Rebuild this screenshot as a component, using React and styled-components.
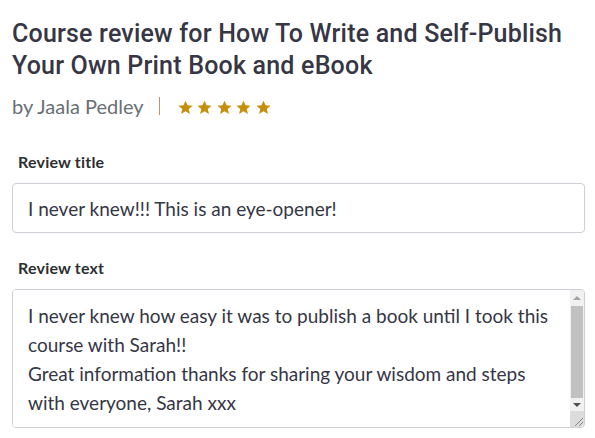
import React from 'react';
import styled, { createGlobalStyle } from 'styled-components';

const GlobalStyle = createGlobalStyle`
	body {
		margin: 0;
		background: #fff;
		font-family: Lato, 'Open Sans', sans-serif;
	}
`;

const Star = () => (
	<svg width="15" height="15" viewBox="0 0 24 24" aria-hidden="true">
		<path
			fill="#c4900c"
			d="M12 1l3.3 7.4 8 .7-6.1 5.3 1.9 7.9L12 18.1l-7.1 4.2 1.9-7.9L.7 9.1l8-.7z"
		/>
	</svg>
);

const Arrow = ({ down, color }) => (
	<svg width="8" height="4" viewBox="0 0 8 4" aria-hidden="true">
		<path fill={color} d={down ? 'M0 0h8L4 4z' : 'M4 0l4 4H0z'} />
	</svg>
);

const Grip = () => (
	<svg width="14" height="14" viewBox="0 0 14 14" aria-hidden="true">
		<path stroke="#8a8a8a" strokeWidth="1" d="M5 13L13 5M9 13l4-4" />
	</svg>
);

const App = () => (
	<>
		<GlobalStyle />
		<Page>
			<Title>Course review for How To Write and Self-Publish Your Own Print Book and eBook</Title>
			<Meta>
				<Author>by Jaala Pedley</Author>
				<Divider />
				<Stars aria-label="5 stars">
					{[0, 1, 2, 3, 4].map((i) => (
						<Star key={i} />
					))}
				</Stars>
			</Meta>

			<Field>
				<Label htmlFor="review-title">Review title</Label>
				<Input id="review-title" defaultValue="I never knew!!! This is an eye-opener!" />
			</Field>

			<Field>
				<Label htmlFor="review-text">Review text</Label>
				<TextBox>
					<TextArea
						id="review-text"
						defaultValue={
							'I never knew how easy it was to publish a book until I took this course with Sarah!!\nGreat information thanks for sharing your wisdom and steps with everyone, Sarah xxx'
						}
					/>
					<ScrollBar>
						<ScrollButton $height={16}>
							<Arrow color="#a3a3a3" />
						</ScrollButton>
						<Track>
							<Thumb />
						</Track>
						<ScrollButton $height={13}>
							<Arrow down color="#505050" />
						</ScrollButton>
						<Resizer>
							<Grip />
						</Resizer>
					</ScrollBar>
				</TextBox>
			</Field>
		</Page>
	</>
);

const Page = styled.div`
	width: 573px;
	padding: 12px 10px 0 12px;
`;

export const Title = styled.h1`
	margin: 6px 0 0;
	font-family: Roboto, 'Liberation Sans', sans-serif;
	font-size: 25px;
	line-height: 32px;
	font-weight: 500;
	letter-spacing: 0.2px;
	color: #363645;
`;

const Meta = styled.div`
	display: flex;
	align-items: center;
	margin-top: 10px;
	height: 28px;
`;

const Author = styled.span`
	font-size: 20px;
	color: #6a6f73;
`;

const Divider = styled.span`
	width: 1px;
	height: 18px;
	margin: 0 18px 0 15px;
	background: #c0966c;
`;

const Stars = styled.div`
	display: flex;
	gap: 4.5px;
	padding-top: 3px;
`;

const Field = styled.div`
	display: flex;
	flex-direction: column;
	margin-top: 32px;

	& + & {
		margin-top: 25px;
	}
`;

const Label = styled.label`
	padding-left: 6px;
	font-size: 16px;
	font-weight: 700;
	line-height: 20px;
	letter-spacing: 0.2px;
	color: #2d2f31;
	margin-bottom: 11px;
`;

const Input = styled.input`
	box-sizing: border-box;
	height: 50px;
	padding: 0 15px;
	border: 1px solid #cfced6;
	border-radius: 4px;
	font-family: inherit;
	font-size: 19px;
	color: #363645;
	outline: none;
`;

const TextBox = styled.div`
	display: flex;
	box-sizing: border-box;
	height: 139px;
	border: 1px solid #cfced6;
	border-radius: 4px;
	overflow: hidden;
`;

const TextArea = styled.textarea`
	flex: 1;
	min-width: 0;
	margin: 0;
	padding: 11px 10px 12px 15px;
	border: 0;
	font-family: inherit;
	font-size: 19px;
	line-height: 29px;
	color: #363645;
	outline: none;
	resize: none;
	overflow: hidden;
`;

const ScrollBar = styled.div`
	display: flex;
	flex-direction: column;
	width: 14px;
	background: #f1f1f1;
`;

const ScrollButton = styled.div`
	display: flex;
	align-items: center;
	justify-content: center;
	height: ${({ $height }) => $height}px;
`;

const Track = styled.div`
	flex: 1;
	display: flex;
	padding: 0 1px 0 1px;
`;

const Thumb = styled.div`
	flex: 1;
	background: #c1c1c1;
`;

const Resizer = styled.div`
	display: flex;
	align-items: flex-end;
	justify-content: flex-end;
	height: 16px;
	background: #dcdcdc;
`;

export default App;
